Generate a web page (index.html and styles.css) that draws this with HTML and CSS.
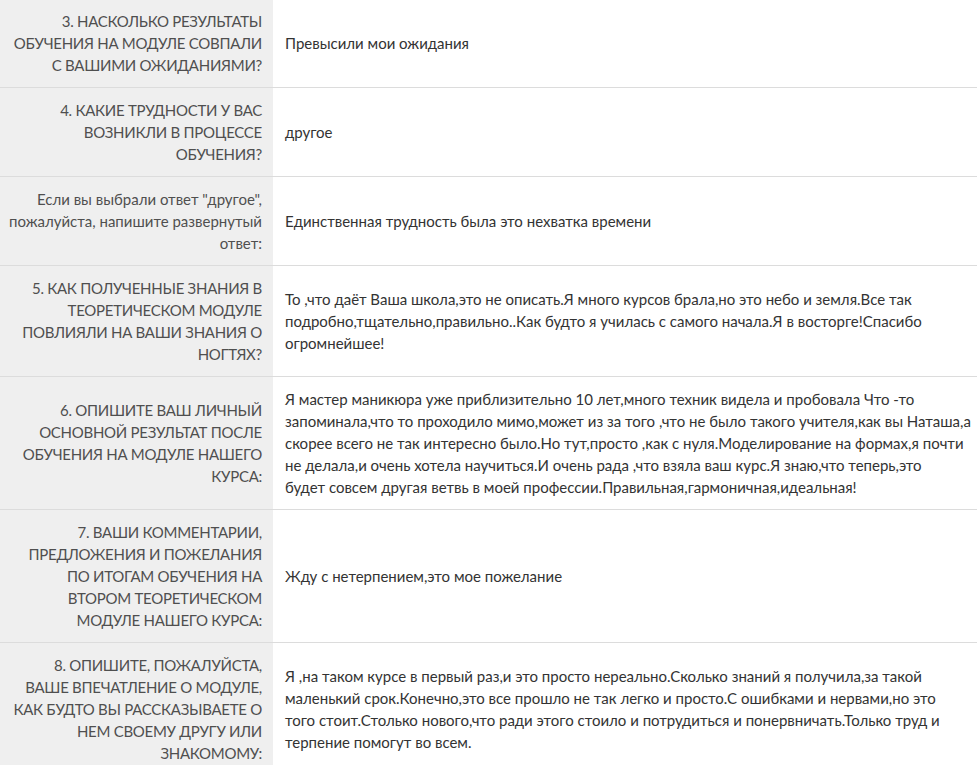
FILE: index.html
```html
<!DOCTYPE html>
<html lang="ru">
<head>
<meta charset="utf-8">
<link rel="stylesheet" href="styles.css">
</head>
<body>
<div class="answers">
  <div class="row">
    <div class="q upper"><span>3. НАСКОЛЬКО РЕЗУЛЬТАТЫ ОБУЧЕНИЯ НА МОДУЛЕ СОВПАЛИ С ВАШИМИ ОЖИДАНИЯМИ?</span></div>
    <div class="a">Превысили мои ожидания</div>
  </div>
  <div class="row">
    <div class="q upper"><span>4. КАКИЕ ТРУДНОСТИ У ВАС ВОЗНИКЛИ В ПРОЦЕССЕ ОБУЧЕНИЯ?</span></div>
    <div class="a">другое</div>
  </div>
  <div class="row">
    <div class="q"><span>Если вы выбрали ответ "другое", пожалуйста, напишите развернутый ответ:</span></div>
    <div class="a">Единственная трудность была это нехватка времени</div>
  </div>
  <div class="row">
    <div class="q upper"><span>5. КАК ПОЛУЧЕННЫЕ ЗНАНИЯ В ТЕОРЕТИЧЕСКОМ МОДУЛЕ ПОВЛИЯЛИ НА ВАШИ ЗНАНИЯ О НОГТЯХ?</span></div>
    <div class="a">То ,что даёт Ваша школа,это не описать.Я много курсов брала,но это небо и земля.Все так подробно,тщательно,правильно..Как будто я училась с самого начала.Я в восторге!Спасибо огромнейшее!</div>
  </div>
  <div class="row">
    <div class="q upper"><span>6. ОПИШИТЕ ВАШ ЛИЧНЫЙ ОСНОВНОЙ РЕЗУЛЬТАТ ПОСЛЕ ОБУЧЕНИЯ НА МОДУЛЕ НАШЕГО КУРСА:</span></div>
    <div class="a">Я мастер маникюра уже приблизительно 10 лет,много техник видела и пробовала Что -то запоминала,что то проходило мимо,может из за того ,что не было такого учителя,как вы Наташа,а скорее всего не так интересно было.Но тут,просто ,как с нуля.Моделирование на формах,я почти не делала,и очень хотела научиться.И очень рада ,что взяла ваш курс.Я знаю,что теперь,это<br>будет совсем другая ветвь в моей профессии.Правильная,гармоничная,идеальная!</div>
  </div>
  <div class="row">
    <div class="q upper"><span>7. ВАШИ КОММЕНТАРИИ, ПРЕДЛОЖЕНИЯ И ПОЖЕЛАНИЯ ПО ИТОГАМ ОБУЧЕНИЯ НА ВТОРОМ ТЕОРЕТИЧЕСКОМ МОДУЛЕ НАШЕГО КУРСА:</span></div>
    <div class="a">Жду с нетерпением,это мое пожелание</div>
  </div>
  <div class="row">
    <div class="q upper"><span>8. ОПИШИТЕ, ПОЖАЛУЙСТА, ВАШЕ ВПЕЧАТЛЕНИЕ О МОДУЛЕ, КАК БУДТО ВЫ РАССКАЗЫВАЕТЕ О НЕМ СВОЕМУ ДРУГУ ИЛИ ЗНАКОМОМУ:</span></div>
    <div class="a">Я ,на таком курсе в первый раз,и это просто нереально.Сколько знаний я получила,за такой маленький срок.Конечно,это все прошло не так легко и просто.С ошибками и нервами,но это<br>того стоит.Столько нового,что ради этого стоило и потрудиться и понервничать.Только труд и терпение помогут во всем.</div>
  </div>
</div>
</body>
</html>
```
FILE: styles.css
```css
html, body {
  margin: 0;
  padding: 0;
  background: #fff;
}
.answers {
  margin-top: -1px;
  font-family: Lato, "Open Sans", sans-serif;
  font-size: 15px;
  line-height: 22px;
}
.row {
  display: grid;
  grid-template-columns: 273px 1fr;
  border-bottom: 1px solid #dcdcdc;
}
.q {
  background: #efefef;
  color: #4f4f4f;
  text-align: right;
  padding: 11px 11px 11px 8px;
  display: flex;
  align-items: center;
  justify-content: flex-end;
}
.q.upper {
  letter-spacing: -0.28px;
}
.a {
  color: #333;
  padding: 11px 6px 11px 12px;
  align-self: center;
  letter-spacing: 0;
}
```
